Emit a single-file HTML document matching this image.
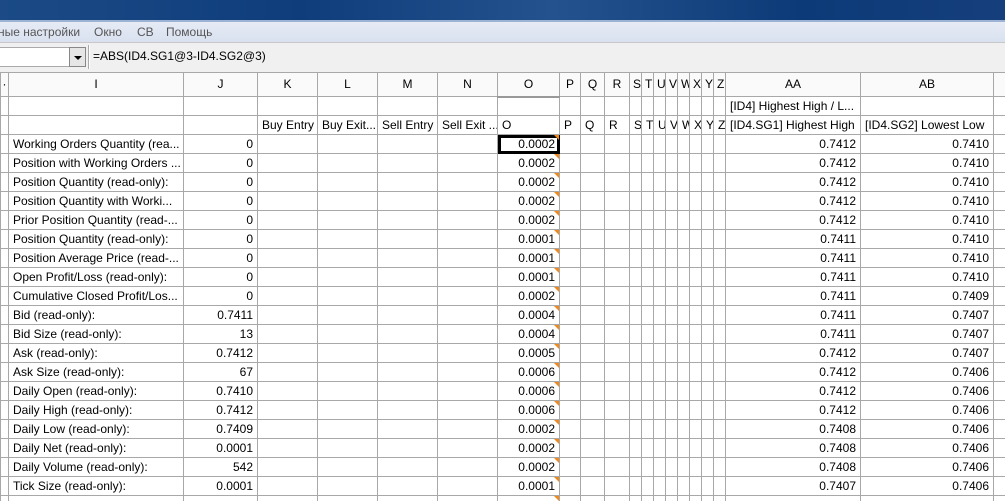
<!DOCTYPE html>
<html><head><meta charset="utf-8"><style>
*{margin:0;padding:0;box-sizing:border-box}
html,body{width:1005px;height:501px;overflow:hidden}
body{background:#fff;font-family:"Liberation Sans","DejaVu Sans",sans-serif;font-size:12px;color:#000;position:relative}
#title{position:absolute;left:0;top:0;width:1005px;height:20px;background:linear-gradient(90deg,#1b4a86 0%,#0f3d7c 30%,#24528e 55%,#0c3a78 80%,#153f7c 100%)}
#tline{position:absolute;left:0;top:20px;width:1005px;height:2px;background:#9db3d3}
#menu{position:absolute;left:0;top:22px;width:1005px;height:20px;background:linear-gradient(#e6ebf5,#d9e1f0);color:#555;font-size:12px;line-height:20px}
#menu span{position:absolute;top:0}
#fbar{position:absolute;left:0;top:42px;width:1005px;height:30px;background:#f0f0f0;border-top:1px solid #c8c8c8}
#nbox{position:absolute;left:0;top:4px;width:70px;height:20px;background:#fff;border:1px solid #aaa;border-left:none}
#dd{position:absolute;left:69px;top:4px;width:17px;height:20px;background:#e6e6e6;border:1px solid #888}
#dd:after{content:"";position:absolute;left:4px;top:8px;border-left:4px solid transparent;border-right:4px solid transparent;border-top:4px solid #000}
#fsep{position:absolute;left:88px;top:2px;width:2px;height:24px;border-left:1px solid #aaa;border-right:1px solid #fff}
#ftext{position:absolute;left:93px;top:6px;font-size:12px}
#wrap{position:absolute;left:0;top:72px;width:1005px;height:429px;overflow:hidden}
table{border-collapse:collapse;table-layout:fixed;width:1005px}
td{border:1px solid #a8a8a8;height:19px;padding:0 4px;white-space:nowrap;overflow:hidden;text-overflow:clip;font-size:12px;line-height:17px}
tr.h td{height:24px;text-align:center;background:#fafafa}
td.r{text-align:right}
td.o{position:relative}
td.o:after{content:"";position:absolute;right:0;top:0;border-left:5px solid transparent;border-top:5px solid #f08a1c}
td.sel{outline:3px solid #000;outline-offset:-3px}
td.n{padding:0 0 0 4px;text-align:left!important}
tr.h td.n{padding-left:3px}
</style></head><body>
<div id="title"></div><div id="tline"></div>
<div id="menu"><span style="left:-2px">ные настройки</span><span style="left:94px">Окно</span><span style="left:137px">СВ</span><span style="left:166px">Помощь</span></div>
<div id="fbar"><div id="nbox"></div><div id="dd"></div><div id="fsep"></div><div id="ftext">=ABS(ID4.SG1@3-ID4.SG2@3)</div></div>
<div id="wrap"><table>
<colgroup><col style="width:8px"><col style="width:175px"><col style="width:74px"><col style="width:60px"><col style="width:60px"><col style="width:60px"><col style="width:60px"><col style="width:62px"><col style="width:21px"><col style="width:24px"><col style="width:25px"><col style="width:12px"><col style="width:12px"><col style="width:12px"><col style="width:12px"><col style="width:12px"><col style="width:12px"><col style="width:12px"><col style="width:12px"><col style="width:135px"><col style="width:133px"><col style="width:12px"></colgroup>
<tr class="h"><td style="padding:0">·</td><td>I</td><td>J</td><td>K</td><td>L</td><td>M</td><td>N</td><td style="border-bottom:2px solid #999">O</td><td>P</td><td>Q</td><td>R</td><td class="n">S</td><td class="n">T</td><td class="n">U</td><td class="n">V</td><td class="n">W</td><td class="n">X</td><td class="n">Y</td><td class="n">Z</td><td>AA</td><td>AB</td><td></td></tr>
<tr><td></td><td></td><td></td><td></td><td></td><td></td><td></td><td></td><td></td><td></td><td></td><td></td><td></td><td></td><td></td><td></td><td></td><td></td><td></td><td>[ID4] Highest High / L...</td><td></td><td></td></tr>
<tr><td></td><td></td><td></td><td>Buy Entry</td><td>Buy Exit...</td><td>Sell Entry</td><td>Sell Exit ...</td><td>O</td><td class="n">P</td><td class="n">Q</td><td class="n">R</td><td class="n">S</td><td class="n">T</td><td class="n">U</td><td class="n">V</td><td class="n">W</td><td class="n">X</td><td class="n">Y</td><td class="n">Z</td><td>[ID4.SG1] Highest High</td><td>[ID4.SG2] Lowest Low</td><td></td></tr>
<tr><td></td><td>Working Orders Quantity (rea...</td><td class="r">0</td><td></td><td></td><td></td><td></td><td class="r o sel">0.0002</td><td></td><td></td><td></td><td></td><td></td><td></td><td></td><td></td><td></td><td></td><td></td><td class="r">0.7412</td><td class="r">0.7410</td><td></td></tr>
<tr><td></td><td>Position with Working Orders ...</td><td class="r">0</td><td></td><td></td><td></td><td></td><td class="r o">0.0002</td><td></td><td></td><td></td><td></td><td></td><td></td><td></td><td></td><td></td><td></td><td></td><td class="r">0.7412</td><td class="r">0.7410</td><td></td></tr>
<tr><td></td><td>Position Quantity (read-only):</td><td class="r">0</td><td></td><td></td><td></td><td></td><td class="r o">0.0002</td><td></td><td></td><td></td><td></td><td></td><td></td><td></td><td></td><td></td><td></td><td></td><td class="r">0.7412</td><td class="r">0.7410</td><td></td></tr>
<tr><td></td><td>Position Quantity with Worki...</td><td class="r">0</td><td></td><td></td><td></td><td></td><td class="r o">0.0002</td><td></td><td></td><td></td><td></td><td></td><td></td><td></td><td></td><td></td><td></td><td></td><td class="r">0.7412</td><td class="r">0.7410</td><td></td></tr>
<tr><td></td><td>Prior Position Quantity (read-...</td><td class="r">0</td><td></td><td></td><td></td><td></td><td class="r o">0.0002</td><td></td><td></td><td></td><td></td><td></td><td></td><td></td><td></td><td></td><td></td><td></td><td class="r">0.7412</td><td class="r">0.7410</td><td></td></tr>
<tr><td></td><td>Position Quantity (read-only):</td><td class="r">0</td><td></td><td></td><td></td><td></td><td class="r o">0.0001</td><td></td><td></td><td></td><td></td><td></td><td></td><td></td><td></td><td></td><td></td><td></td><td class="r">0.7411</td><td class="r">0.7410</td><td></td></tr>
<tr><td></td><td>Position Average Price (read-...</td><td class="r">0</td><td></td><td></td><td></td><td></td><td class="r o">0.0001</td><td></td><td></td><td></td><td></td><td></td><td></td><td></td><td></td><td></td><td></td><td></td><td class="r">0.7411</td><td class="r">0.7410</td><td></td></tr>
<tr><td></td><td>Open Profit/Loss (read-only):</td><td class="r">0</td><td></td><td></td><td></td><td></td><td class="r o">0.0001</td><td></td><td></td><td></td><td></td><td></td><td></td><td></td><td></td><td></td><td></td><td></td><td class="r">0.7411</td><td class="r">0.7410</td><td></td></tr>
<tr><td></td><td>Cumulative Closed Profit/Los...</td><td class="r">0</td><td></td><td></td><td></td><td></td><td class="r o">0.0002</td><td></td><td></td><td></td><td></td><td></td><td></td><td></td><td></td><td></td><td></td><td></td><td class="r">0.7411</td><td class="r">0.7409</td><td></td></tr>
<tr><td></td><td>Bid (read-only):</td><td class="r">0.7411</td><td></td><td></td><td></td><td></td><td class="r o">0.0004</td><td></td><td></td><td></td><td></td><td></td><td></td><td></td><td></td><td></td><td></td><td></td><td class="r">0.7411</td><td class="r">0.7407</td><td></td></tr>
<tr><td></td><td>Bid Size (read-only):</td><td class="r">13</td><td></td><td></td><td></td><td></td><td class="r o">0.0004</td><td></td><td></td><td></td><td></td><td></td><td></td><td></td><td></td><td></td><td></td><td></td><td class="r">0.7411</td><td class="r">0.7407</td><td></td></tr>
<tr><td></td><td>Ask (read-only):</td><td class="r">0.7412</td><td></td><td></td><td></td><td></td><td class="r o">0.0005</td><td></td><td></td><td></td><td></td><td></td><td></td><td></td><td></td><td></td><td></td><td></td><td class="r">0.7412</td><td class="r">0.7407</td><td></td></tr>
<tr><td></td><td>Ask Size (read-only):</td><td class="r">67</td><td></td><td></td><td></td><td></td><td class="r o">0.0006</td><td></td><td></td><td></td><td></td><td></td><td></td><td></td><td></td><td></td><td></td><td></td><td class="r">0.7412</td><td class="r">0.7406</td><td></td></tr>
<tr><td></td><td>Daily Open (read-only):</td><td class="r">0.7410</td><td></td><td></td><td></td><td></td><td class="r o">0.0006</td><td></td><td></td><td></td><td></td><td></td><td></td><td></td><td></td><td></td><td></td><td></td><td class="r">0.7412</td><td class="r">0.7406</td><td></td></tr>
<tr><td></td><td>Daily High (read-only):</td><td class="r">0.7412</td><td></td><td></td><td></td><td></td><td class="r o">0.0006</td><td></td><td></td><td></td><td></td><td></td><td></td><td></td><td></td><td></td><td></td><td></td><td class="r">0.7412</td><td class="r">0.7406</td><td></td></tr>
<tr><td></td><td>Daily Low (read-only):</td><td class="r">0.7409</td><td></td><td></td><td></td><td></td><td class="r o">0.0002</td><td></td><td></td><td></td><td></td><td></td><td></td><td></td><td></td><td></td><td></td><td></td><td class="r">0.7408</td><td class="r">0.7406</td><td></td></tr>
<tr><td></td><td>Daily Net (read-only):</td><td class="r">0.0001</td><td></td><td></td><td></td><td></td><td class="r o">0.0002</td><td></td><td></td><td></td><td></td><td></td><td></td><td></td><td></td><td></td><td></td><td></td><td class="r">0.7408</td><td class="r">0.7406</td><td></td></tr>
<tr><td></td><td>Daily Volume (read-only):</td><td class="r">542</td><td></td><td></td><td></td><td></td><td class="r o">0.0002</td><td></td><td></td><td></td><td></td><td></td><td></td><td></td><td></td><td></td><td></td><td></td><td class="r">0.7408</td><td class="r">0.7406</td><td></td></tr>
<tr><td></td><td>Tick Size (read-only):</td><td class="r">0.0001</td><td></td><td></td><td></td><td></td><td class="r o">0.0001</td><td></td><td></td><td></td><td></td><td></td><td></td><td></td><td></td><td></td><td></td><td></td><td class="r">0.7407</td><td class="r">0.7406</td><td></td></tr>
<tr><td></td><td></td><td></td><td></td><td></td><td></td><td></td><td class="o"></td><td></td><td></td><td></td><td></td><td></td><td></td><td></td><td></td><td></td><td></td><td></td><td></td><td></td><td></td></tr>
</table></div>
</body></html>
